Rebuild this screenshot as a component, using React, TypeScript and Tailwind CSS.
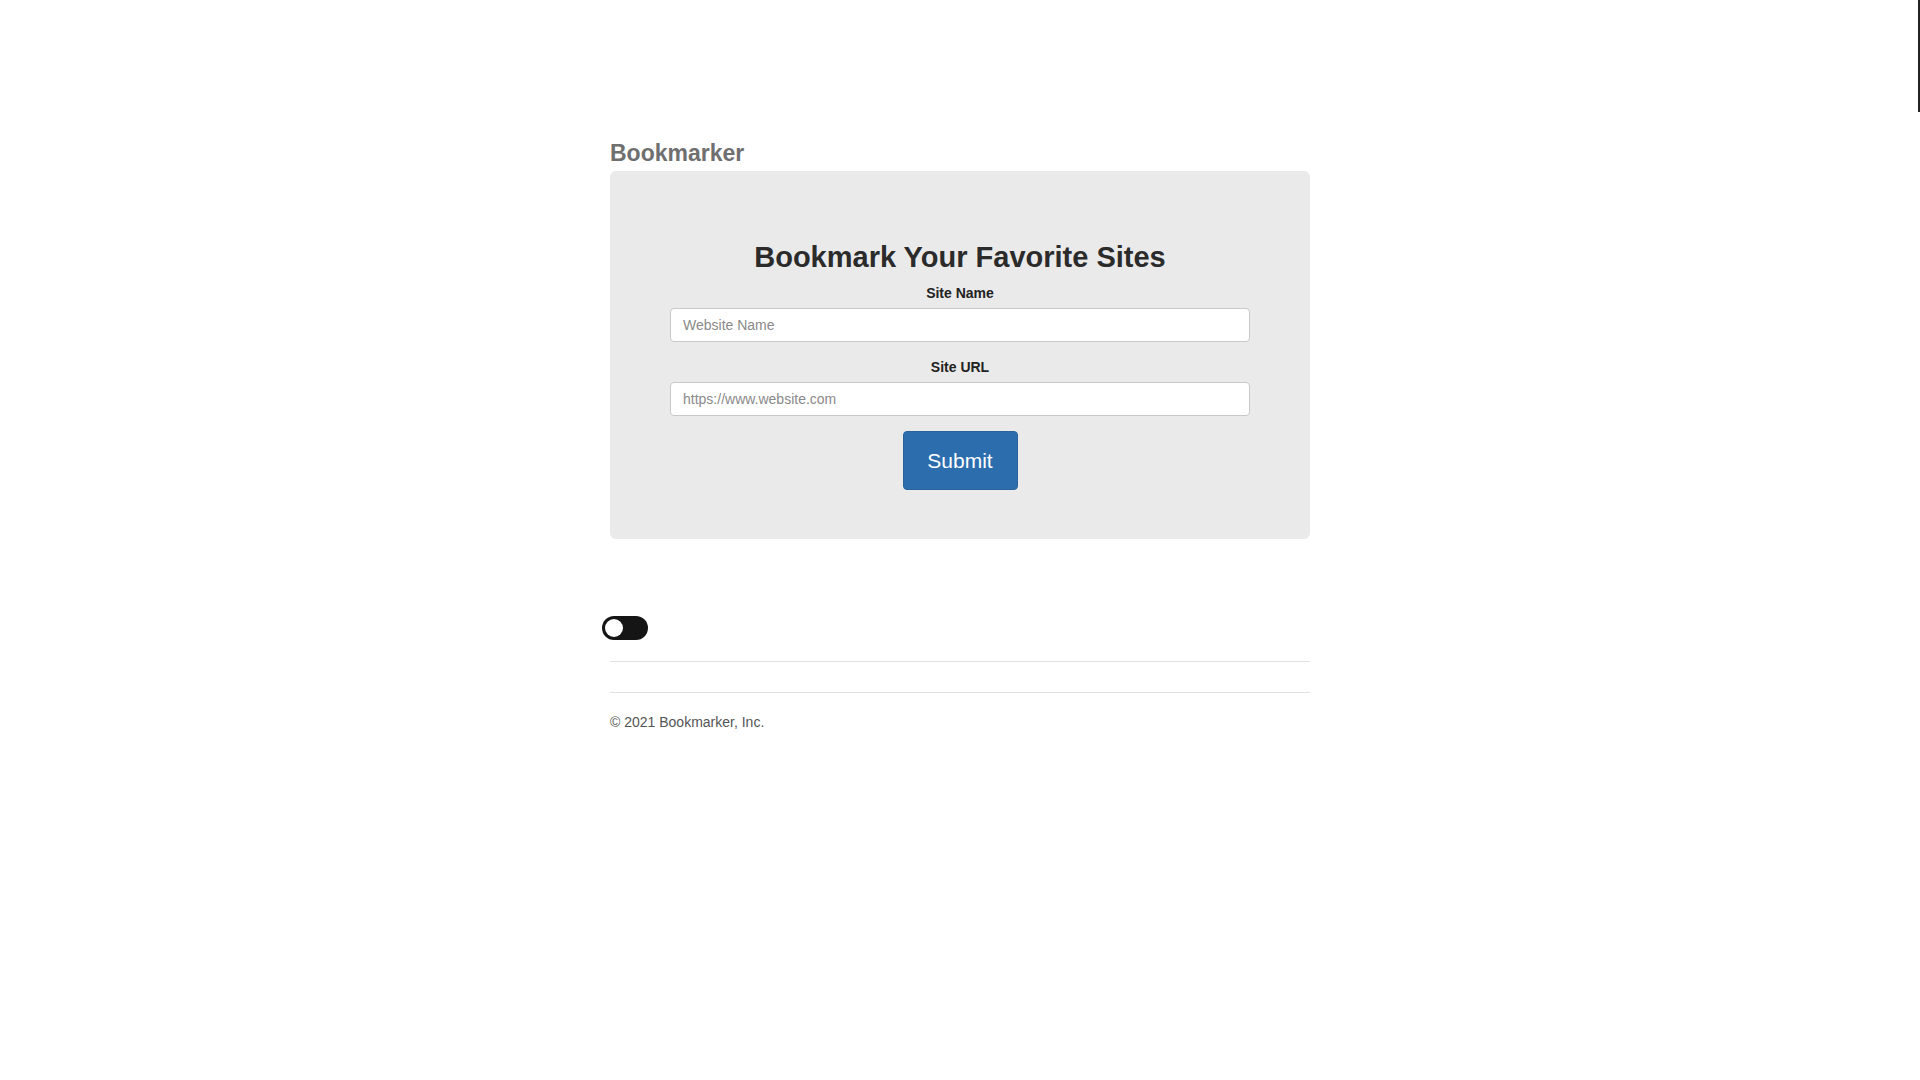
import { useState } from 'react';

function Toggle() {
  const [on, setOn] = useState(false);
  return (
    <button
      type="button"
      onClick={() => setOn(!on)}
      className="-ml-2 flex h-[24px] w-[46px] items-center rounded-full bg-[#151515] px-[3px]"
    >
      <span
        className={
          on
            ? 'h-[18px] w-[18px] translate-x-[22px] rounded-full bg-white transition-transform'
            : 'h-[18px] w-[18px] rounded-full bg-white transition-transform'
        }
      />
    </button>
  );
}

export default function App() {
  const [name, setName] = useState('');
  const [url, setUrl] = useState('');

  return (
    <div className="relative min-h-screen w-full bg-white font-['Liberation_Sans',Arial,sans-serif] text-[#333]">
      <div className="absolute right-0 top-0 h-[112px] w-[2px] bg-[#222]" />

      <div className="mx-auto w-[700px] pt-[140px]">
        <h3 className="mb-[5px] text-[23px] font-bold leading-[26px] text-[#6f6f6f]">Bookmarker</h3>

        <div className="rounded-[6px] bg-[#eaeaea] px-[60px] pb-[49px] pt-[70px]">
          <h2 className="mb-[10px] text-center text-[29px] font-bold leading-[32px] text-[#2b2b2b]">
            Bookmark Your Favorite Sites
          </h2>

          <form className="flex flex-col" onSubmit={(e) => e.preventDefault()}>
            <label className="mb-[5px] text-center text-[14px] font-bold leading-[20px] text-[#222]">Site Name</label>
            <input
              value={name}
              onChange={(e) => setName(e.target.value)}
              placeholder="Website Name"
              className="h-[34px] w-full rounded-[4px] border border-[#c8c8c8] bg-white px-[12px] text-[14px] text-[#555] outline-none placeholder:text-[#8a8a8a]"
            />

            <label className="mb-[5px] mt-[15px] text-center text-[14px] font-bold leading-[20px] text-[#222]">Site URL</label>
            <input
              value={url}
              onChange={(e) => setUrl(e.target.value)}
              placeholder="https://www.website.com"
              className="h-[34px] w-full rounded-[4px] border border-[#c8c8c8] bg-white px-[12px] text-[14px] text-[#555] outline-none placeholder:text-[#8a8a8a]"
            />

            <button
              type="submit"
              className="mx-auto mt-[15px] flex h-[59px] w-[115px] items-center justify-center rounded-[4px] border border-[#2a639c] bg-[#2c6dad] text-[21px] text-white"
            >
              Submit
            </button>
          </form>
        </div>

        <div className="mt-[77px]">
          <Toggle />
        </div>

        <hr className="mt-[21px] border-0 border-t border-[#e2e2e2]" />

        <footer className="mt-[30px] border-t border-[#e2e2e2] pt-[19px]">
          <p className="text-[14px] leading-[20px] text-[#555]">© 2021 Bookmarker, Inc.</p>
        </footer>
      </div>
    </div>
  );
}
